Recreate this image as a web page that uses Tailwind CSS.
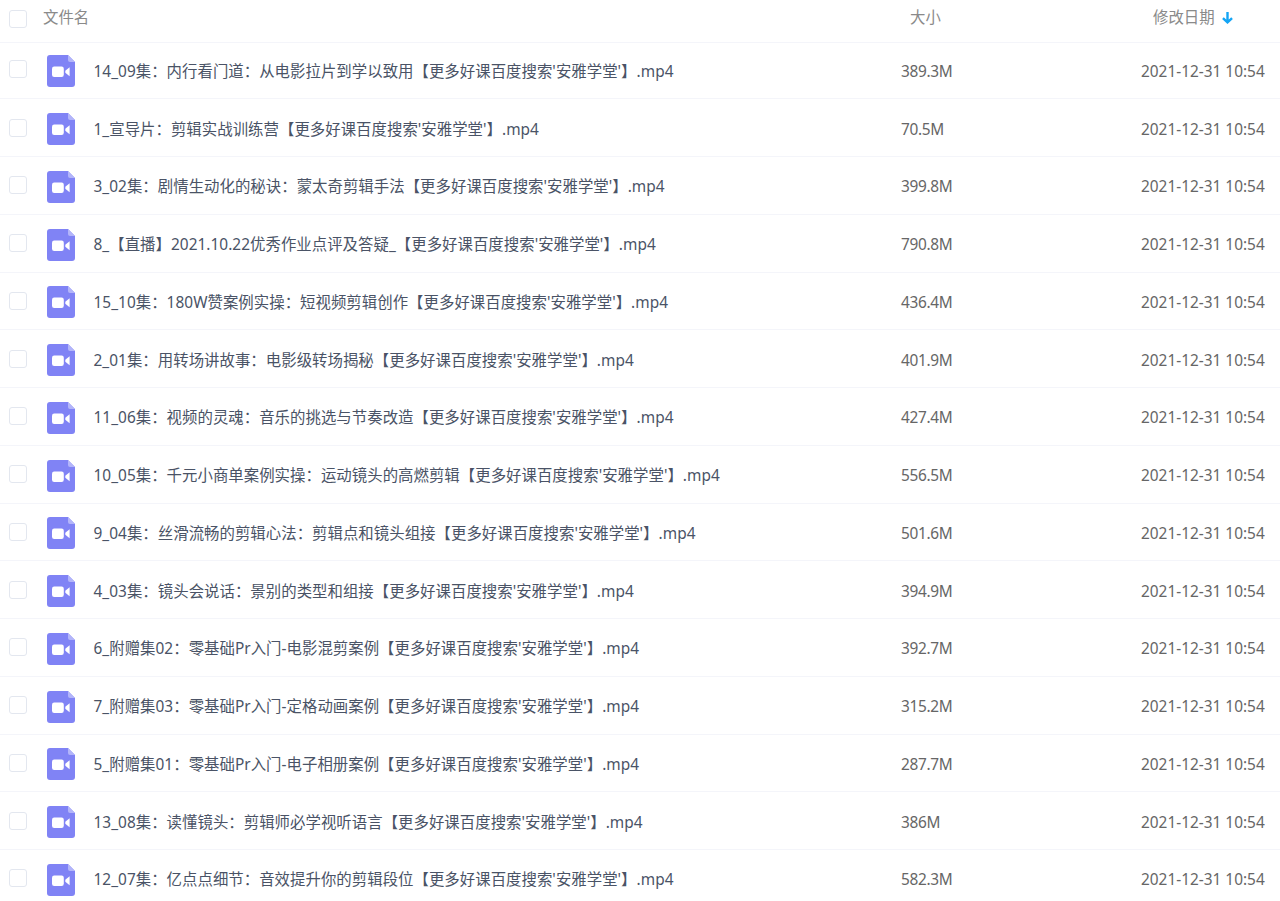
<!DOCTYPE html>
<html lang="en">
<head>
  <meta charset="UTF-8">
  <title>文件列表</title>
  <script src="https://cdn.jsdelivr.net/npm/@tailwindcss/browser@4"></script>
</head>
<body class="bg-white font-['Noto_Sans','Noto_Sans_CJK_SC',sans-serif] text-[15.4px] h-[901px] overflow-hidden">
  <svg class="hidden">
    <symbol id="video" viewBox="0 0 28 32">
      <path d="M3 0H21L28 7V29a3 3 0 0 1-3 3H3a3 3 0 0 1-3-3V3a3 3 0 0 1 3-3Z" fill="#8083f5"/>
      <path d="M21 0L28 7H23a2 2 0 0 1-2-2Z" fill="#b3b5fa"/>
      <rect x="5" y="11.5" width="11.8" height="10.5" rx="2.2" fill="#fff"/>
      <path d="M18.3 15.8L22.6 12.2V21.3L18.3 17.7Z" fill="#fff"/>
    </symbol>
  </svg>

  <!-- header -->
  <div class="flex items-center h-[43px] border-b border-[#f4f5fa] text-[#8a8a8a]">
    <span class="w-[18px] h-[18px] ml-[9px] mb-[4px] border border-[#e3e7ef] rounded-[3px]"></span>
    <span class="ml-[16px] mb-[6px]">文件名</span>
    <span class="ml-auto mb-[6px] w-[243px]">大小</span>
    <span class="mb-[6px] w-[127px] flex items-center">修改日期
      <svg class="w-[13px] h-[13px] ml-[6px] mb-[1px]" viewBox="0 0 12 12" fill="none" stroke="#14a5f5" stroke-width="2.2"><path d="M6 1V10.5M1.8 6.5L6 10.5L10.2 6.5"/></svg>
    </span>
  </div>

  <!-- rows -->
  <div class="flex items-center h-[56.25px] pt-[1px] border-b border-[#f4f5fa] text-[#4a5366]"><span class="w-[18px] h-[18px] ml-[9px] mb-[4px] border border-[#e3e7ef] rounded-[3px]"></span><svg class="w-[28px] h-[32px] ml-[19.5px]"><use href="#video"/></svg><span class="ml-[19px] flex-1 tracking-[0.04px]">14_09集：内行看门道：从电影拉片到学以致用【更多好课百度搜索'安雅学堂'】.mp4</span><span class="w-[240px] tracking-[-0.3px] text-[#666]">389.3M</span><span class="w-[139px] text-[#666] whitespace-nowrap">2021-12-31 10:54</span></div>
  <div class="flex items-center h-[57.75px] pt-[3px] border-b border-[#f4f5fa] text-[#4a5366]"><span class="w-[18px] h-[18px] ml-[9px] mb-[3px] border border-[#e3e7ef] rounded-[3px]"></span><svg class="w-[28px] h-[32px] ml-[19.5px]"><use href="#video"/></svg><span class="ml-[19px] flex-1 tracking-[0.04px]">1_宣导片：剪辑实战训练营【更多好课百度搜索'安雅学堂'】.mp4</span><span class="w-[240px] tracking-[-0.3px] text-[#666]">70.5M</span><span class="w-[139px] text-[#666] whitespace-nowrap">2021-12-31 10:54</span></div>
  <div class="flex items-center h-[57.75px] pt-[3px] border-b border-[#f4f5fa] text-[#4a5366]"><span class="w-[18px] h-[18px] ml-[9px] mb-[3px] border border-[#e3e7ef] rounded-[3px]"></span><svg class="w-[28px] h-[32px] ml-[19.5px]"><use href="#video"/></svg><span class="ml-[19px] flex-1 tracking-[0.04px]">3_02集：剧情生动化的秘诀：蒙太奇剪辑手法【更多好课百度搜索'安雅学堂'】.mp4</span><span class="w-[240px] tracking-[-0.3px] text-[#666]">399.8M</span><span class="w-[139px] text-[#666] whitespace-nowrap">2021-12-31 10:54</span></div>
  <div class="flex items-center h-[57.75px] pt-[3px] border-b border-[#f4f5fa] text-[#4a5366]"><span class="w-[18px] h-[18px] ml-[9px] mb-[3px] border border-[#e3e7ef] rounded-[3px]"></span><svg class="w-[28px] h-[32px] ml-[19.5px]"><use href="#video"/></svg><span class="ml-[19px] flex-1 tracking-[0.04px]">8_【直播】2021.10.22优秀作业点评及答疑_【更多好课百度搜索'安雅学堂'】.mp4</span><span class="w-[240px] tracking-[-0.3px] text-[#666]">790.8M</span><span class="w-[139px] text-[#666] whitespace-nowrap">2021-12-31 10:54</span></div>
  <div class="flex items-center h-[57.75px] pt-[3px] border-b border-[#f4f5fa] text-[#4a5366]"><span class="w-[18px] h-[18px] ml-[9px] mb-[3px] border border-[#e3e7ef] rounded-[3px]"></span><svg class="w-[28px] h-[32px] ml-[19.5px]"><use href="#video"/></svg><span class="ml-[19px] flex-1 tracking-[0.04px]">15_10集：180W赞案例实操：短视频剪辑创作【更多好课百度搜索'安雅学堂'】.mp4</span><span class="w-[240px] tracking-[-0.3px] text-[#666]">436.4M</span><span class="w-[139px] text-[#666] whitespace-nowrap">2021-12-31 10:54</span></div>
  <div class="flex items-center h-[57.75px] pt-[3px] border-b border-[#f4f5fa] text-[#4a5366]"><span class="w-[18px] h-[18px] ml-[9px] mb-[3px] border border-[#e3e7ef] rounded-[3px]"></span><svg class="w-[28px] h-[32px] ml-[19.5px]"><use href="#video"/></svg><span class="ml-[19px] flex-1 tracking-[0.04px]">2_01集：用转场讲故事：电影级转场揭秘【更多好课百度搜索'安雅学堂'】.mp4</span><span class="w-[240px] tracking-[-0.3px] text-[#666]">401.9M</span><span class="w-[139px] text-[#666] whitespace-nowrap">2021-12-31 10:54</span></div>
  <div class="flex items-center h-[57.75px] pt-[3px] border-b border-[#f4f5fa] text-[#4a5366]"><span class="w-[18px] h-[18px] ml-[9px] mb-[3px] border border-[#e3e7ef] rounded-[3px]"></span><svg class="w-[28px] h-[32px] ml-[19.5px]"><use href="#video"/></svg><span class="ml-[19px] flex-1 tracking-[0.04px]">11_06集：视频的灵魂：音乐的挑选与节奏改造【更多好课百度搜索'安雅学堂'】.mp4</span><span class="w-[240px] tracking-[-0.3px] text-[#666]">427.4M</span><span class="w-[139px] text-[#666] whitespace-nowrap">2021-12-31 10:54</span></div>
  <div class="flex items-center h-[57.75px] pt-[3px] border-b border-[#f4f5fa] text-[#4a5366]"><span class="w-[18px] h-[18px] ml-[9px] mb-[3px] border border-[#e3e7ef] rounded-[3px]"></span><svg class="w-[28px] h-[32px] ml-[19.5px]"><use href="#video"/></svg><span class="ml-[19px] flex-1 tracking-[0.04px]">10_05集：千元小商单案例实操：运动镜头的高燃剪辑【更多好课百度搜索'安雅学堂'】.mp4</span><span class="w-[240px] tracking-[-0.3px] text-[#666]">556.5M</span><span class="w-[139px] text-[#666] whitespace-nowrap">2021-12-31 10:54</span></div>
  <div class="flex items-center h-[57.75px] pt-[3px] border-b border-[#f4f5fa] text-[#4a5366]"><span class="w-[18px] h-[18px] ml-[9px] mb-[3px] border border-[#e3e7ef] rounded-[3px]"></span><svg class="w-[28px] h-[32px] ml-[19.5px]"><use href="#video"/></svg><span class="ml-[19px] flex-1 tracking-[0.04px]">9_04集：丝滑流畅的剪辑心法：剪辑点和镜头组接【更多好课百度搜索'安雅学堂'】.mp4</span><span class="w-[240px] tracking-[-0.3px] text-[#666]">501.6M</span><span class="w-[139px] text-[#666] whitespace-nowrap">2021-12-31 10:54</span></div>
  <div class="flex items-center h-[57.75px] pt-[3px] border-b border-[#f4f5fa] text-[#4a5366]"><span class="w-[18px] h-[18px] ml-[9px] mb-[3px] border border-[#e3e7ef] rounded-[3px]"></span><svg class="w-[28px] h-[32px] ml-[19.5px]"><use href="#video"/></svg><span class="ml-[19px] flex-1 tracking-[0.04px]">4_03集：镜头会说话：景别的类型和组接【更多好课百度搜索'安雅学堂'】.mp4</span><span class="w-[240px] tracking-[-0.3px] text-[#666]">394.9M</span><span class="w-[139px] text-[#666] whitespace-nowrap">2021-12-31 10:54</span></div>
  <div class="flex items-center h-[57.75px] pt-[3px] border-b border-[#f4f5fa] text-[#4a5366]"><span class="w-[18px] h-[18px] ml-[9px] mb-[3px] border border-[#e3e7ef] rounded-[3px]"></span><svg class="w-[28px] h-[32px] ml-[19.5px]"><use href="#video"/></svg><span class="ml-[19px] flex-1 tracking-[0.04px]">6_附赠集02：零基础Pr入门-电影混剪案例【更多好课百度搜索'安雅学堂'】.mp4</span><span class="w-[240px] tracking-[-0.3px] text-[#666]">392.7M</span><span class="w-[139px] text-[#666] whitespace-nowrap">2021-12-31 10:54</span></div>
  <div class="flex items-center h-[57.75px] pt-[3px] border-b border-[#f4f5fa] text-[#4a5366]"><span class="w-[18px] h-[18px] ml-[9px] mb-[3px] border border-[#e3e7ef] rounded-[3px]"></span><svg class="w-[28px] h-[32px] ml-[19.5px]"><use href="#video"/></svg><span class="ml-[19px] flex-1 tracking-[0.04px]">7_附赠集03：零基础Pr入门-定格动画案例【更多好课百度搜索'安雅学堂'】.mp4</span><span class="w-[240px] tracking-[-0.3px] text-[#666]">315.2M</span><span class="w-[139px] text-[#666] whitespace-nowrap">2021-12-31 10:54</span></div>
  <div class="flex items-center h-[57.75px] pt-[3px] border-b border-[#f4f5fa] text-[#4a5366]"><span class="w-[18px] h-[18px] ml-[9px] mb-[3px] border border-[#e3e7ef] rounded-[3px]"></span><svg class="w-[28px] h-[32px] ml-[19.5px]"><use href="#video"/></svg><span class="ml-[19px] flex-1 tracking-[0.04px]">5_附赠集01：零基础Pr入门-电子相册案例【更多好课百度搜索'安雅学堂'】.mp4</span><span class="w-[240px] tracking-[-0.3px] text-[#666]">287.7M</span><span class="w-[139px] text-[#666] whitespace-nowrap">2021-12-31 10:54</span></div>
  <div class="flex items-center h-[57.75px] pt-[3px] border-b border-[#f4f5fa] text-[#4a5366]"><span class="w-[18px] h-[18px] ml-[9px] mb-[3px] border border-[#e3e7ef] rounded-[3px]"></span><svg class="w-[28px] h-[32px] ml-[19.5px]"><use href="#video"/></svg><span class="ml-[19px] flex-1 tracking-[0.04px]">13_08集：读懂镜头：剪辑师必学视听语言【更多好课百度搜索'安雅学堂'】.mp4</span><span class="w-[240px] tracking-[-0.3px] text-[#666]">386M</span><span class="w-[139px] text-[#666] whitespace-nowrap">2021-12-31 10:54</span></div>
  <div class="flex items-center h-[57.75px] pt-[3px] border-b border-[#f4f5fa] text-[#4a5366]"><span class="w-[18px] h-[18px] ml-[9px] mb-[3px] border border-[#e3e7ef] rounded-[3px]"></span><svg class="w-[28px] h-[32px] ml-[19.5px]"><use href="#video"/></svg><span class="ml-[19px] flex-1 tracking-[0.04px]">12_07集：亿点点细节：音效提升你的剪辑段位【更多好课百度搜索'安雅学堂'】.mp4</span><span class="w-[240px] tracking-[-0.3px] text-[#666]">582.3M</span><span class="w-[139px] text-[#666] whitespace-nowrap">2021-12-31 10:54</span></div>
</body>
</html>
